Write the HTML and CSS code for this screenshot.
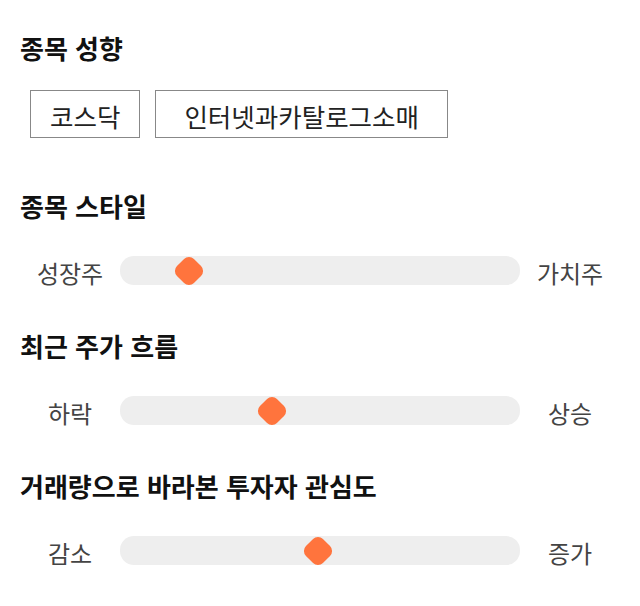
FILE: index.html
```html
<!DOCTYPE html>
<html lang="ko">
<head>
    <meta charset="UTF-8">
    <meta name="viewport" content="width=device-width, initial-scale=1.0">
    <title>종목 성향</title>
    <link rel="stylesheet" href="styles.css">
</head>
<body>
    <div class="section">
        <h2>종목 성향</h2>
        <div class="chips">
            <span class="chip">코스닥</span>
            <span class="chip chip-wide">인터넷과카탈로그소매</span>
        </div>
    </div>

    <div class="section">
        <h2>종목 스타일</h2>
        <div class="slider-row">
            <span class="label">성장주</span>
            <div class="track">
                <div class="thumb" style="left: 57px;"></div>
            </div>
            <span class="label">가치주</span>
        </div>
    </div>

    <div class="section">
        <h2>최근 주가 흐름</h2>
        <div class="slider-row">
            <span class="label">하락</span>
            <div class="track">
                <div class="thumb" style="left: 140px;"></div>
            </div>
            <span class="label">상승</span>
        </div>
    </div>

    <div class="section">
        <h2>거래량으로 바라본 투자자 관심도</h2>
        <div class="slider-row">
            <span class="label">감소</span>
            <div class="track">
                <div class="thumb" style="left: 185.5px;"></div>
            </div>
            <span class="label">증가</span>
        </div>
    </div>
</body>
</html>
```

FILE: styles.css
```css
body {
    font-family: "Noto Sans CJK KR", "Noto Sans", sans-serif;
    background-color: #fff;
    color: #111;
    margin: 0;
    padding: 32px 20px 0;
}
.section {
    margin-bottom: 45px;
}
.section:first-child {
    margin-bottom: 52px;
}
h2 {
    font-size: 26px;
    font-weight: bold;
    line-height: 32px;
    margin: 0;
}
.chips {
    display: flex;
    gap: 15px;
    margin-top: 26px;
    padding-left: 10px;
}
.chip {
    display: flex;
    align-items: center;
    justify-content: center;
    height: 44px;
    padding: 2px 19px 0;
    border: 1px solid #888;
    font-size: 25.5px;
    color: #222;
}
.chip-wide {
    padding: 2px 28px 0;
}
.slider-row {
    display: flex;
    align-items: center;
    margin-top: 34px;
}
.label {
    width: 100px;
    text-align: center;
    font-size: 24px;
    line-height: 25px;
    padding-top: 4px;
    color: #444;
}
.track {
    position: relative;
    width: 400px;
    height: 29px;
    border-radius: 14px;
    background-color: #eee;
}
.thumb {
    position: absolute;
    top: 2.5px;
    width: 24px;
    height: 24px;
    border-radius: 7px;
    background-color: #ff743d;
    transform: rotate(45deg);
}
```
